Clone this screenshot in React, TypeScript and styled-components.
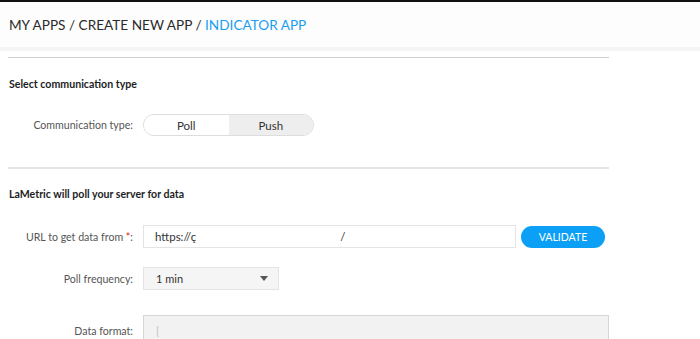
import React from 'react';
import styled, { createGlobalStyle } from 'styled-components';

const GlobalStyle = createGlobalStyle`
  html, body {
    margin: 0;
    padding: 0;
    background: #ffffff;
    font-family: Lato, "Open Sans", "Liberation Sans", sans-serif;
    color: #222;
  }
`;

const TopBar = styled.div`
  height: 2px;
  background: #111;
`;

const Header = styled.header`
  height: 45px;
  background: #fdfdfd;
  display: flex;
  align-items: center;
  padding-left: 9px;
  border-bottom: 4px solid #f5f5f5;
`;

const Crumbs = styled.div`
  font-size: 13.6px;
  color: #2a2a2a;
`;

const Current = styled.span`
  color: #1a9ef0;
`;

const Main = styled.main`
  width: 601px;
  padding: 0 8px;
`;

const Divider = styled.div<{ $strong?: boolean }>`
  height: ${p => (p.$strong ? '1px' : '2px')};
  background: ${p => (p.$strong ? '#cfcfcf' : '#e4e4e4')};
  margin-top: ${p => (p.$strong ? '6px' : '31px')};
`;

const SectionTitle = styled.h3<{ $top: number }>`
  margin: ${p => p.$top}px 0 0 1px;
  font-size: 10.6px;
  line-height: 16px;
  font-weight: 700;
  color: #1e1e1e;
`;

const Row = styled.div<{ $top: number }>`
  display: flex;
  align-items: center;
  margin-top: ${p => p.$top}px;
`;

const Label = styled.label<{ $alignTop?: boolean }>`
  width: 125px;
  flex: none;
  text-align: right;
  margin-right: 10px;
  font-size: 10.6px;
  color: #555;
  align-self: ${p => (p.$alignTop ? 'flex-start' : 'center')};
  padding-top: ${p => (p.$alignTop ? '10px' : '0')};
`;

const Required = styled.span`
  color: #e02020;
`;

const Toggle = styled.div`
  display: flex;
  width: 171px;
  height: 22px;
  border: 1px solid #dddddd;
  border-radius: 12px;
  overflow: hidden;
  box-sizing: border-box;
`;

const ToggleOption = styled.button<{ $active?: boolean }>`
  flex: 1;
  border: none;
  padding: 0;
  margin: 0;
  font-family: inherit;
  font-size: 11.5px;
  color: #333;
  background: ${p => (p.$active ? '#eeeeee' : '#ffffff')};
  cursor: pointer;
`;

const TextInput = styled.div`
  width: 373px;
  height: 23px;
  box-sizing: border-box;
  border: 1px solid #e4e4e4;
  display: flex;
  align-items: center;
  padding-left: 11px;
  font-size: 11.5px;
  color: #333;
`;

const Redacted = styled.span`
  display: inline-block;
  width: 144px;
  height: 12px;
  background: #fff;
`;

const ValidateButton = styled.button`
  margin-left: 5px;
  width: 84px;
  height: 22px;
  border: none;
  border-radius: 11px;
  background: #0ba0f6;
  color: #fff;
  font-family: inherit;
  font-size: 10.5px;
  cursor: pointer;
`;

const Select = styled.div`
  width: 136px;
  height: 23px;
  box-sizing: border-box;
  border: 1px solid #e4e4e4;
  background: #f5f5f5;
  display: flex;
  align-items: center;
  justify-content: space-between;
  padding: 0 10px 0 12px;
  font-size: 11px;
  color: #333;
`;

const Caret = styled.span`
  width: 0;
  height: 0;
  border-left: 4px solid transparent;
  border-right: 4px solid transparent;
  border-top: 5px solid #555;
`;

const TextArea = styled.div`
  width: 466px;
  height: 120px;
  box-sizing: border-box;
  border: 1px solid #d6d6d6;
  background: #f2f2f2;
  padding: 8px 12px;
  font-size: 11px;
  color: #c4c4c4;
`;

export default function App() {
  return (
    <>
      <GlobalStyle />
      <TopBar />
      <Header>
        <Crumbs>
          MY APPS / CREATE NEW APP / <Current>INDICATOR APP</Current>
        </Crumbs>
      </Header>
      <Main>
        <Divider $strong />
        <SectionTitle $top={18}>Select communication type</SectionTitle>
        <Row $top={22}>
          <Label>Communication type:</Label>
          <Toggle>
            <ToggleOption>Poll</ToggleOption>
            <ToggleOption $active>Push</ToggleOption>
          </Toggle>
        </Row>
        <Divider />
        <SectionTitle $top={17}>LaMetric will poll your server for data</SectionTitle>
        <Row $top={23}>
          <Label>
            URL to get data from <Required>*</Required>:
          </Label>
          <TextInput>
            https://ç<Redacted />/
          </TextInput>
          <ValidateButton>VALIDATE</ValidateButton>
        </Row>
        <Row $top={19}>
          <Label>Poll frequency:</Label>
          <Select>
            1 min
            <Caret />
          </Select>
        </Row>
        <Row $top={25}>
          <Label $alignTop>Data format:</Label>
          <TextArea>{'{'}</TextArea>
        </Row>
      </Main>
    </>
  );
}
